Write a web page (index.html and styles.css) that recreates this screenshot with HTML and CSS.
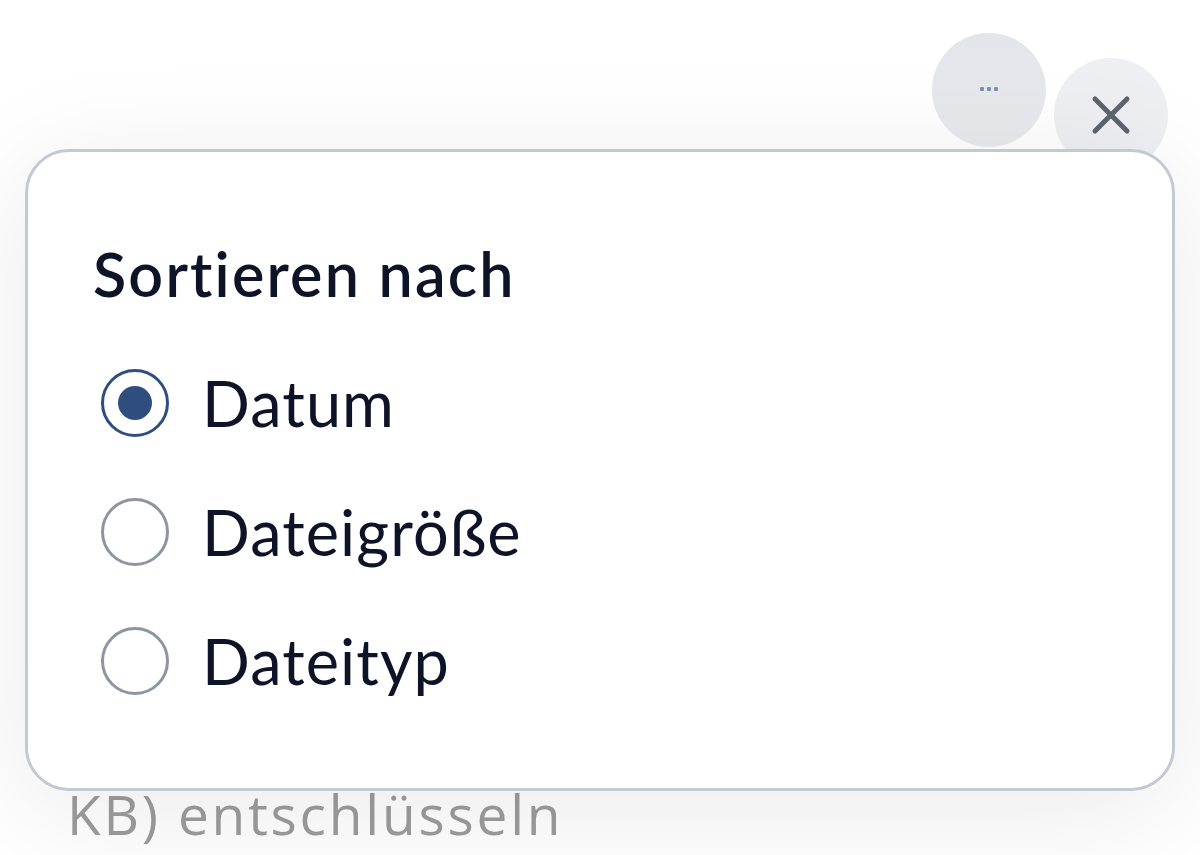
FILE: index.html
```html
<!DOCTYPE html>
<html lang="de">
<head>
<meta charset="utf-8">
<title>Sortieren nach</title>
<link rel="stylesheet" href="styles.css">
</head>
<body>
<div class="screen">
  <div class="toolbar">
    <button class="circle-btn more-btn" aria-label="Mehr">
      <span class="dots"><i></i><i></i><i></i></span>
    </button>
    <button class="circle-btn close-btn" aria-label="Schließen">
      <svg width="40" height="40" viewBox="0 0 40 40" aria-hidden="true">
        <path d="M4 4 L36 36 M36 4 L4 36" stroke="#5d646e" stroke-width="5" stroke-linecap="round" fill="none"/>
      </svg>
    </button>
  </div>
  <div class="content">
    <p class="file-line">KB) entschlüsseln</p>
  </div>

  <div class="popover" role="dialog" aria-label="Sortieren nach">
    <h2 class="popover-title">Sortieren nach</h2>
    <ul class="options">
      <li class="option"><span class="radio checked"></span><span class="label">Datum</span></li>
      <li class="option"><span class="radio"></span><span class="label">Dateigröße</span></li>
      <li class="option"><span class="radio"></span><span class="label">Dateityp</span></li>
    </ul>
  </div>
</div>
</body>
</html>
```

FILE: styles.css
```css
* { box-sizing: border-box; }
html, body {
  margin: 0;
  padding: 0;
  width: 1200px;
  height: 855px;
  overflow: hidden;
  background: #ffffff;
}
.screen {
  position: relative;
  width: 1200px;
  height: 855px;
  font-family: Lato, "Noto Sans", sans-serif;
  font-variant-ligatures: none;
}
.toolbar {
  display: flex;
  justify-content: flex-end;
  align-items: flex-start;
  gap: 8px;
  padding: 33px 32px 0 0;
}
.circle-btn {
  width: 114px;
  height: 114px;
  border-radius: 50%;
  border: none;
  padding: 0;
  display: flex;
  align-items: center;
  justify-content: center;
  cursor: pointer;
}
.more-btn {
  background: linear-gradient(180deg, #e4e5ea 0%, #e9eaee 100%);
}
.dots {
  display: flex;
  gap: 3px;
  margin-top: -2px;
}
.dots i {
  display: block;
  width: 4px;
  height: 4px;
  border-radius: 1px;
  background: #7f8fb0;
}
.close-btn {
  margin-top: 25px;
  background: #eeeff2;
}
.content {
  padding: 0 0 0 67px;
  margin-top: 610px;
}
.file-line {
  margin: 0;
  font-family: "Open Sans", "Liberation Sans", sans-serif;
  font-weight: 400;
  font-size: 55px;
  line-height: 64px;
  letter-spacing: 2.8px;
  color: #9c9c9c;
}
.popover {
  position: absolute;
  left: 25px;
  top: 149px;
  width: 1150px;
  height: 642px;
  background: #ffffff;
  border: 3px solid #c3c9d2;
  border-radius: 44px;
  box-shadow: 0 20px 120px rgba(0, 0, 0, 0.085);
  padding: 86px 0 0 65px;
}
.popover-title {
  margin: 0;
  font-size: 61px;
  font-weight: 600;
  line-height: 72px;
  letter-spacing: 2.2px;
  color: #0e1428;
}
.options {
  list-style: none;
  margin: 28px 0 0 0;
  padding: 0 0 0 8px;
}
.option {
  display: flex;
  align-items: center;
  gap: 33px;
  height: 129px;
  font-size: 63px;
  letter-spacing: 1.1px;
  color: #0e1428;
}
.radio {
  flex: none;
  width: 68px;
  height: 68px;
  border-radius: 50%;
  border: 3px solid #8d959f;
  display: flex;
  align-items: center;
  justify-content: center;
}
.radio.checked {
  border-color: #2f4d7e;
}
.radio.checked::after {
  content: "";
  width: 34px;
  height: 34px;
  border-radius: 50%;
  background: #2f4d7e;
}
```
